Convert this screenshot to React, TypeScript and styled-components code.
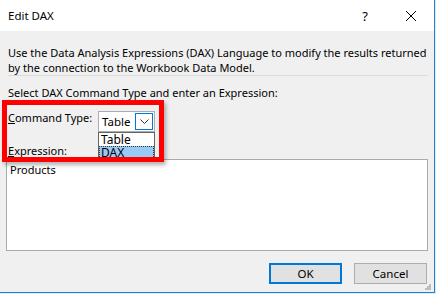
import React from 'react';
import styled, { createGlobalStyle } from 'styled-components';

const GlobalStyle = createGlobalStyle`
  html, body {
    margin: 0;
    padding: 0;
    background: #ffffff;
  }
  body {
    font-family: "Noto Sans", "Open Sans", "Liberation Sans", sans-serif;
    font-size: 11px;
    color: #000;
  }
`;

const Page = styled.div`
  width: 436px;
  height: 294px;
  overflow: hidden;
  background: #e8e8e8;
`;

const Dialog = styled.div`
  position: relative;
  width: 434px;
  height: 292px;
  display: flex;
  flex-direction: column;
  background: #f0f0f0;
  border-right: 1px solid #1883d7;
  border-bottom: 1px solid #1883d7;
`;

const TitleBar = styled.div`
  height: 31px;
  flex-shrink: 0;
  display: flex;
  align-items: center;
  background: #ffffff;
  padding-left: 8px;
`;

const Title = styled.div`
  flex: 1;
  font-size: 11.5px;
  line-height: 15px;
`;

const TitleButton = styled.div<{ $w: number }>`
  width: ${({ $w }) => $w}px;
  height: 31px;
  display: flex;
  align-items: center;
  justify-content: center;
  font-size: 13px;
  color: #000;
`;

const Body = styled.div`
  flex: 1;
  display: flex;
  flex-direction: column;
  padding: 14px 6px 0 8px;
`;

const Text = styled.div`
  font-size: 11px;
  line-height: 15px;
  height: 15px;
  white-space: nowrap;
`;

const Separator = styled.div`
  height: 1px;
  background: #dadada;
  margin: 0 0 9px;
`;

const CommandRow = styled.div`
  display: flex;
  align-items: flex-start;
  margin-top: 10px;
  height: 33px;
`;

const CommandLabel = styled(Text)`
  width: 90px;
`;

const Combo = styled.div`
  position: relative;
  width: 57px;
  height: 21px;
  margin-top: 1px;
  box-sizing: border-box;
  border: 1px solid #adadad;
  background: #ffffff;
  display: flex;
  align-items: center;
`;

const ComboText = styled.div`
  flex: 1;
  padding-left: 3px;
  line-height: 15px;
  font-size: 11.5px;
`;

const ComboArrow = styled.div`
  width: 18px;
  height: 17px;
  margin-right: 1px;
  box-sizing: border-box;
  border: 1px solid #0078d7;
  display: flex;
  align-items: center;
  justify-content: center;
`;

const DropList = styled.div`
  position: absolute;
  left: -1px;
  top: 20px;
  width: 57px;
  box-sizing: border-box;
  border: 1px solid #646464;
  background: #ffffff;
  z-index: 2;
`;

const DropItem = styled.div<{ $selected?: boolean }>`
  height: 13px;
  line-height: 13px;
  padding-left: 2px;
  background: ${({ $selected }) => ($selected ? '#99c9f5' : '#ffffff')};
  outline: ${({ $selected }) => ($selected ? '1px dotted #333' : 'none')};
  outline-offset: -1px;
  font-size: 12px;
`;

const TextArea = styled.div`
  margin: 1px 0 0 -2px;
  height: 92px;
  box-sizing: border-box;
  border: 1px solid #ababab;
  background: #ffffff;
  padding: 2px 0 0 3px;
  font-size: 11px;
  line-height: 15px;
`;

const ButtonRow = styled.div`
  display: flex;
  justify-content: flex-end;
  gap: 12px;
  margin-top: 12px;
  padding-right: 1px;
`;

const Button = styled.div<{ $primary?: boolean }>`
  width: 73px;
  height: 21px;
  box-sizing: border-box;
  border: ${({ $primary }) => ($primary ? '2px solid #0078d7' : '1px solid #adadad')};
  background: #e1e1e1;
  display: flex;
  align-items: center;
  justify-content: center;
  font-size: 11.5px;
`;

const Grip = styled.svg`
  position: absolute;
  right: 3px;
  bottom: 2px;
`;

const Highlight = styled.div`
  position: absolute;
  left: 2px;
  top: 100px;
  width: 162px;
  height: 62px;
  box-sizing: border-box;
  border: 5px solid #ff0000;
  box-shadow: 2px 3px 4px rgba(0, 0, 0, 0.3);
  z-index: 3;
  pointer-events: none;
`;

const U = styled.span`
  text-decoration: underline;
`;

const App: React.FC = () => {
  return (
    <Page>
      <GlobalStyle />
      <Dialog>
        <TitleBar>
          <Title>Edit DAX</Title>
          <TitleButton $w={46}>?</TitleButton>
          <TitleButton $w={46}>
            <svg width="12" height="12" viewBox="0 0 12 12">
              <path d="M1 1 L11 11 M11 1 L1 11" stroke="#000" strokeWidth="1" fill="none" />
            </svg>
          </TitleButton>
        </TitleBar>
        <Body>
          <Text>Use the Data Analysis Expressions (DAX) Language to modify the results returned</Text>
          <Text>by the connection to the Workbook Data Model.</Text>
          <Separator />
          <Text>Select DAX Command Type and enter an Expression:</Text>
          <CommandRow>
            <CommandLabel>
              <U>C</U>ommand Type:
            </CommandLabel>
            <Combo>
              <ComboText>Table</ComboText>
              <ComboArrow>
                <svg width="9" height="6" viewBox="0 0 9 6">
                  <path d="M0.5 0.5 L4.5 4.5 L8.5 0.5" stroke="#333" strokeWidth="1" fill="none" />
                </svg>
              </ComboArrow>
              <DropList>
                <DropItem>Table</DropItem>
                <DropItem $selected>DAX</DropItem>
              </DropList>
            </Combo>
          </CommandRow>
          <Text>
            <U>E</U>xpression:
          </Text>
          <TextArea>Products</TextArea>
          <ButtonRow>
            <Button $primary>OK</Button>
            <Button>Cancel</Button>
          </ButtonRow>
        </Body>
        <Highlight />
        <Grip width="6" height="6" viewBox="0 0 6 6">
          <rect x="4" y="0" width="2" height="2" fill="#bdbdbd" />
          <rect x="2" y="2" width="2" height="2" fill="#bdbdbd" />
          <rect x="4" y="2" width="2" height="2" fill="#bdbdbd" />
          <rect x="0" y="4" width="2" height="2" fill="#bdbdbd" />
          <rect x="2" y="4" width="2" height="2" fill="#bdbdbd" />
          <rect x="4" y="4" width="2" height="2" fill="#bdbdbd" />
        </Grip>
      </Dialog>
    </Page>
  );
};

export default App;
